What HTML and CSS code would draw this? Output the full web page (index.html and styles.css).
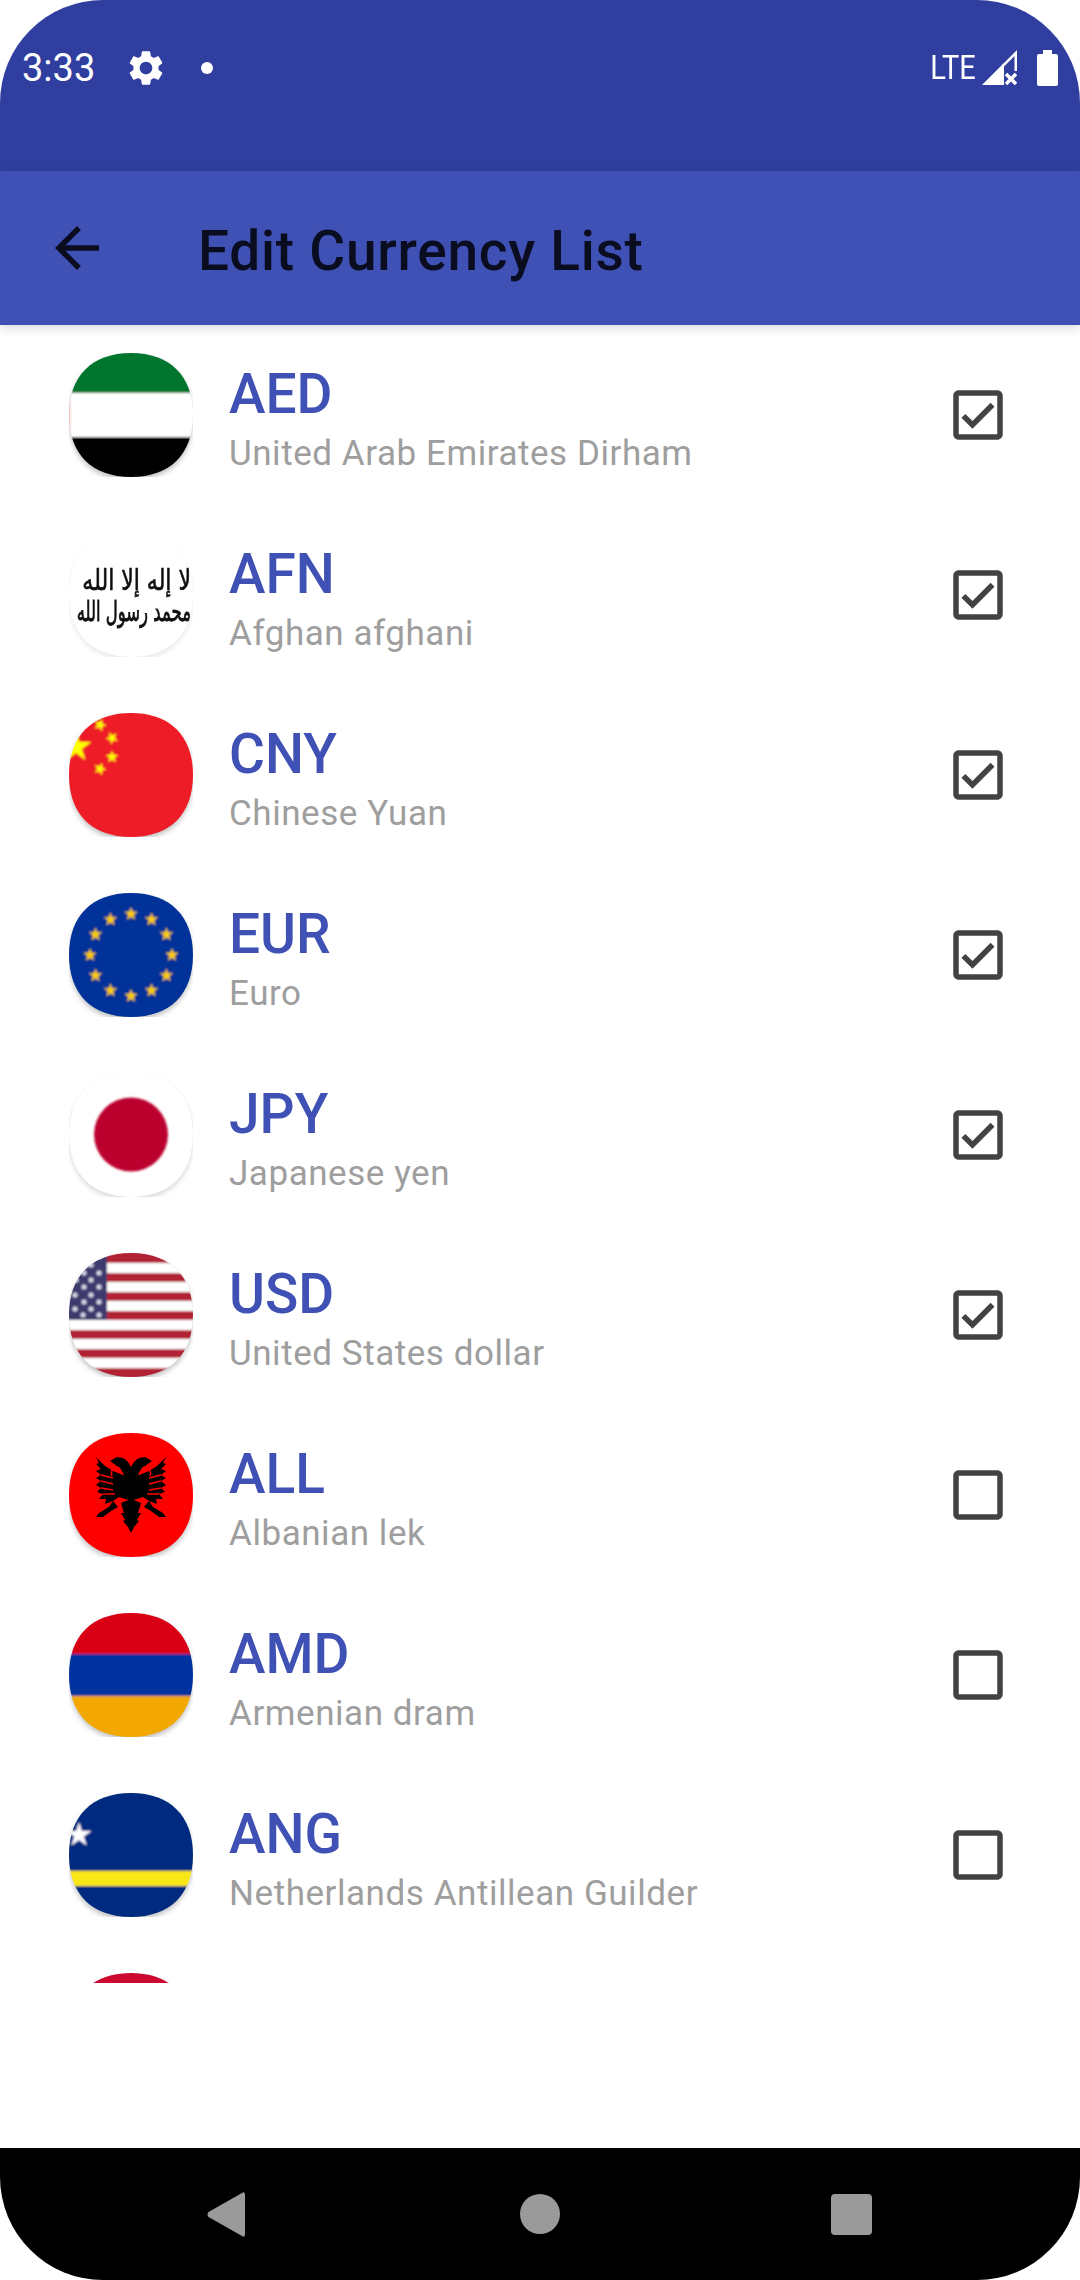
FILE: index.html
```html
<!DOCTYPE html>
<html lang="en">
<head>
    <meta charset="UTF-8">
    <title>Edit Currency List</title>
    <link rel="stylesheet" href="styles.css">
</head>
<body>
    <!-- Shared shapes for the flags and checkboxes -->
    <svg class="defs" width="0" height="0">
        <defs>
            <path id="squirclePath" d="M62 0C101 0 124 23 124 62C124 101 101 124 62 124C23 124 0 101 0 62C0 23 23 0 62 0Z"/>
            <clipPath id="squircle"><use href="#squirclePath"/></clipPath>
            <filter id="soft" x="-5%" y="-5%" width="110%" height="110%"><feGaussianBlur stdDeviation="0.9"/></filter>
            <filter id="softer" x="-5%" y="-5%" width="110%" height="110%"><feGaussianBlur stdDeviation="1.3"/></filter>
            <filter id="sharp" x="-5%" y="-5%" width="110%" height="110%"><feGaussianBlur stdDeviation="0.5"/></filter>
            <filter id="shadeBlur" x="-10%" y="-10%" width="120%" height="120%"><feGaussianBlur stdDeviation="2.5"/></filter>
            <polygon id="star" points="0,-1 .224,-.309 .951,-.309 .363,.118 .588,.809 0,.382 -.588,.809 -.363,.118 -.951,-.309 -.224,-.309"/>
            <g id="shade"><use href="#squirclePath" transform="translate(0 3)" fill="rgba(0,0,0,.24)" filter="url(#shadeBlur)"/></g>
            <symbol id="checked" viewBox="0 0 24 24"><path d="M19 3H5c-1.11 0-2 .9-2 2v14c0 1.1.89 2 2 2h14c1.11 0 2-.9 2-2V5c0-1.1-.89-2-2-2zm0 16H5V5h14v14zM17.99 9l-1.41-1.42-6.59 6.59-2.58-2.57-1.42 1.41 4 3.99z"/></symbol>
            <symbol id="unchecked" viewBox="0 0 24 24"><path d="M19 5v14H5V5h14m0-2H5c-1.1 0-2 .9-2 2v14c0 1.1.9 2 2 2h14c1.1 0 2-.9 2-2V5c0-1.1-.9-2-2-2z"/></symbol>
        </defs>
    </svg>

    <div id="screen">
        <div id="statusBar">
            <span class="time">3:33</span>
            <svg class="gear" viewBox="0 0 24 24"><path d="M19.14 12.94c.04-.3.06-.61.06-.94 0-.32-.02-.64-.07-.94l2.03-1.58c.18-.14.23-.41.12-.61l-1.92-3.32c-.12-.22-.37-.29-.59-.22l-2.39.96c-.5-.38-1.03-.7-1.62-.94l-.36-2.54c-.04-.24-.24-.41-.48-.41h-3.84c-.24 0-.43.17-.47.41l-.36 2.54c-.59.24-1.13.57-1.62.94l-2.39-.96c-.22-.08-.47 0-.59.22L2.74 8.87c-.12.21-.08.47.12.61l2.03 1.58c-.05.3-.09.63-.09.94s.02.64.07.94l-2.03 1.58c-.18.14-.23.41-.12.61l1.92 3.32c.12.22.37.29.59.22l2.39-.96c.5.38 1.03.7 1.62.94l.36 2.54c.05.24.24.41.48.41h3.84c.24 0 .44-.17.47-.41l.36-2.54c.59-.24 1.13-.56 1.62-.94l2.39.96c.22.08.47 0 .59-.22l1.92-3.32c.12-.22.07-.47-.12-.61l-2.01-1.58zM12 15.6c-1.98 0-3.6-1.62-3.6-3.6s1.62-3.6 3.6-3.6 3.6 1.62 3.6 3.6-1.62 3.6-3.6 3.6z"/></svg>
            <span class="dot"></span>
            <span class="lte">LTE</span>
            <svg class="signal" viewBox="0 0 35 35">
                <path d="M0 35L22 13V35Z"/>
                <path d="M35 0V21H32.500V6L21 17.500L19.500 15.500Z"/>
                <path d="M24 24L34 34M34 24L24 34" class="signalCross"/>
            </svg>
            <svg class="battery" viewBox="0 0 21 36"><path d="M6 0H15V4H19C20.100 4 21 4.900 21 6V34C21 35.100 20.100 36 19 36H2C.9 36 0 35.100 0 34V6C0 4.900 .9 4 2 4H6Z"/></svg>
        </div>

        <div id="toolbar">
            <svg class="backArrow" viewBox="0 0 24 24"><path d="M20 11H7.830l5.590-5.590L12 4l-8 8 8 8 1.410-1.410L7.830 13H20v-2z"/></svg>
            <div class="toolbarTitle">Edit Currency List</div>
        </div>

        <div id="currencyList">
            <div class="row">
                <svg class="flag" viewBox="0 0 124 124"><use href="#shade"/><g clip-path="url(#squircle)"><g filter="url(#soft)">
                    <rect x="-4" y="-4" width="132" height="44" fill="#05742f"/>
                    <rect x="-4" y="40" width="132" height="44" fill="#fff"/>
                    <rect x="-4" y="84" width="132" height="44" fill="#000"/>
                    <rect x="-4" y="40" width="5" height="44" fill="#f6a0a0"/>
                </g></g></svg>
                <div class="rowText"><div class="code">AED</div><div class="name">United Arab Emirates Dirham</div></div>
                <svg class="check"><use href="#checked"/></svg>
            </div>
            <div class="row">
                <svg class="flag" viewBox="0 0 124 124"><use href="#shade" opacity=".35"/><g clip-path="url(#squircle)"><use href="#squirclePath" fill="#fff"/><g filter="url(#sharp)">
                    <text class="shahada shahadaTop" transform="translate(122 57) scale(1 1.300)">لا إله إلا الله</text>
                    <text class="shahada" transform="translate(122 88) scale(1 1.700)">محمد رسول الله</text>
                </g></g></svg>
                <div class="rowText"><div class="code">AFN</div><div class="name">Afghan afghani</div></div>
                <svg class="check"><use href="#checked"/></svg>
            </div>
            <div class="row">
                <svg class="flag" viewBox="0 0 124 124"><use href="#shade"/><g clip-path="url(#squircle)"><g filter="url(#soft)">
                    <rect x="-4" y="-4" width="132" height="132" fill="#ee1c25"/>
                    <g fill="#ff0">
                        <use href="#star" transform="translate(7 34) scale(16)"/>
                        <use href="#star" transform="translate(31 12) rotate(20) scale(6.500)"/>
                        <use href="#star" transform="translate(43 25) rotate(45) scale(6.500)"/>
                        <use href="#star" transform="translate(43 44) scale(6.500)"/>
                        <use href="#star" transform="translate(31 56) rotate(20) scale(6.500)"/>
                    </g>
                </g></g></svg>
                <div class="rowText"><div class="code">CNY</div><div class="name">Chinese Yuan</div></div>
                <svg class="check"><use href="#checked"/></svg>
            </div>
            <div class="row">
                <svg class="flag" viewBox="0 0 124 124"><use href="#shade"/><g clip-path="url(#squircle)"><g filter="url(#soft)">
                    <rect x="-4" y="-4" width="132" height="132" fill="#003399"/>
                    <g fill="#fc0">
                        <use href="#star" transform="translate(62 21) scale(7)"/>
                        <use href="#star" transform="translate(82.500 26.500) scale(7)"/>
                        <use href="#star" transform="translate(97.500 41.500) scale(7)"/>
                        <use href="#star" transform="translate(103 62) scale(7)"/>
                        <use href="#star" transform="translate(97.500 82.500) scale(7)"/>
                        <use href="#star" transform="translate(82.500 97.500) scale(7)"/>
                        <use href="#star" transform="translate(62 103) scale(7)"/>
                        <use href="#star" transform="translate(41.500 97.500) scale(7)"/>
                        <use href="#star" transform="translate(26.500 82.500) scale(7)"/>
                        <use href="#star" transform="translate(21 62) scale(7)"/>
                        <use href="#star" transform="translate(26.500 41.500) scale(7)"/>
                        <use href="#star" transform="translate(41.500 26.500) scale(7)"/>
                    </g>
                </g></g></svg>
                <div class="rowText"><div class="code">EUR</div><div class="name">Euro</div></div>
                <svg class="check"><use href="#checked"/></svg>
            </div>
            <div class="row">
                <svg class="flag" viewBox="0 0 124 124"><use href="#shade" opacity=".6"/><g clip-path="url(#squircle)"><use href="#squirclePath" fill="#fff"/><circle cx="62" cy="61.500" r="37" fill="#bc002d" filter="url(#soft)"/></g></svg>
                <div class="rowText"><div class="code">JPY</div><div class="name">Japanese yen</div></div>
                <svg class="check"><use href="#checked"/></svg>
            </div>
            <div class="row">
                <svg class="flag" viewBox="0 0 124 124"><use href="#shade"/><g clip-path="url(#squircle)"><g filter="url(#softer)">
                    <rect x="-4" y="-4" width="132" height="132" fill="#fff"/>
                    <g fill="#b22234">
                        <rect x="-4" y="-4" width="132" height="14"/>
                        <rect x="-4" y="20" width="132" height="9"/>
                        <rect x="-4" y="39" width="132" height="9"/>
                        <rect x="-4" y="58" width="132" height="9"/>
                        <rect x="-4" y="77" width="132" height="9"/>
                        <rect x="-4" y="96" width="132" height="9"/>
                        <rect x="-4" y="115" width="132" height="13"/>
                    </g>
                    <rect x="-4" y="-4" width="42" height="71" fill="#3c3b6e"/>
                    <g fill="#d8d8e6">
                        <circle cx="23" cy="3" r="2.500"/><circle cx="30" cy="3" r="2.500"/>
                        <circle cx="22" cy="12" r="2.500"/><circle cx="30" cy="20" r="2.500"/>
                        <circle cx="15" cy="20" r="2.500"/><circle cx="22" cy="27" r="2.500"/>
                        <circle cx="7" cy="27" r="2.500"/><circle cx="30" cy="34" r="2.500"/>
                        <circle cx="15" cy="34" r="2.500"/><circle cx="22" cy="42" r="2.500"/>
                        <circle cx="6" cy="42" r="2.500"/><circle cx="30" cy="49" r="2.500"/>
                        <circle cx="15" cy="49" r="2.500"/><circle cx="22" cy="56" r="2.500"/>
                        <circle cx="6" cy="56" r="2.500"/><circle cx="30" cy="62" r="2.500"/>
                        <circle cx="14" cy="62" r="2.500"/>
                    </g>
                </g></g></svg>
                <div class="rowText"><div class="code">USD</div><div class="name">United States dollar</div></div>
                <svg class="check"><use href="#checked"/></svg>
            </div>
            <div class="row">
                <svg class="flag" viewBox="0 0 124 124"><use href="#shade"/><g clip-path="url(#squircle)"><g filter="url(#sharp)">
                    <rect x="-4" y="-4" width="132" height="132" fill="#f00"/>
                    <g id="eagleHalf">
                        <path d="M54 42L44 38L36 33L27 24L30 30L27 31L32 36L27 38L32 42L27 45L32 48L27 52L32 55L28 59L34 61L30 66L37 66L36 71L44 68L50 64L62 68V42Z"/>
                        <path d="M62 50L56 43C52 38 53 35 48 33L41 28L48 24L54 25C58 27 60 30 62 34Z"/>
                        <path d="M52 70L55 80L52 80L56 87L54 88L59 94L62 100V66Z"/>
                        <path d="M44 68L40 74L30 80L27 84L34 84L42 78L49 74Z"/>
                        <path d="M46 35C43 37 41 39 43 43M32 42L44 45M32 48L44 51M32 55L44 57M34 61L46 61" fill="none" stroke="#f00" stroke-width="1.500"/>
                    </g>
                    <use href="#eagleHalf" transform="translate(124 0) scale(-1 1)"/>
                </g></g></svg>
                <div class="rowText"><div class="code">ALL</div><div class="name">Albanian lek</div></div>
                <svg class="check"><use href="#unchecked"/></svg>
            </div>
            <div class="row">
                <svg class="flag" viewBox="0 0 124 124"><use href="#shade"/><g clip-path="url(#squircle)"><g filter="url(#soft)">
                    <rect x="-4" y="-4" width="132" height="45" fill="#d90012"/>
                    <rect x="-4" y="41" width="132" height="42" fill="#0033a0"/>
                    <rect x="-4" y="83" width="132" height="45" fill="#f2a800"/>
                </g></g></svg>
                <div class="rowText"><div class="code">AMD</div><div class="name">Armenian dram</div></div>
                <svg class="check"><use href="#unchecked"/></svg>
            </div>
            <div class="row">
                <svg class="flag" viewBox="0 0 124 124"><use href="#shade"/><g clip-path="url(#squircle)"><g filter="url(#soft)">
                    <rect x="-4" y="-4" width="132" height="132" fill="#002b7f"/>
                    <rect x="-4" y="78" width="132" height="15" fill="#f9e814"/>
                    <use href="#star" transform="translate(10 42) scale(13)" fill="#fff"/>
                </g></g></svg>
                <div class="rowText"><div class="code">ANG</div><div class="name">Netherlands Antillean Guilder</div></div>
                <svg class="check"><use href="#unchecked"/></svg>
            </div>
            <!-- Next row is cut off by the list edge, only the top of its flag shows -->
            <div class="row">
                <svg class="flag" viewBox="0 0 124 124"><g clip-path="url(#squircle)"><rect width="124" height="62" fill="#cc092f"/></g></svg>
            </div>
        </div>

        <div id="navBar">
            <svg class="navBack" viewBox="0 0 38 45"><path d="M35 1Q38 -1 38 3V42Q38 46 35 44L1.500 25Q-.5 22.500 1.500 20Z"/></svg>
            <span class="navHome"></span>
            <span class="navRecent"></span>
        </div>
    </div>
</body>
</html>
```

FILE: styles.css
```css
body {
    margin: 0;
    background-color: #fff;
    font-family: Roboto, "Liberation Sans", sans-serif;
    overflow: hidden;
}

.defs {
    position: absolute;
}

#screen {
    display: flex;
    flex-direction: column;
    width: 1080px;
    height: 2280px;
}

/* Status bar */
#statusBar {
    display: flex;
    align-items: center;
    box-sizing: border-box;
    height: 171px;
    padding: 0 22px 36px 22px;
    background-color: #303f9f;
    border-radius: 103px 103px 0 0;
    color: #fff;
}

.time {
    font-size: 38px;
    width: 103px;
}

.gear {
    width: 42px;
    height: 42px;
    fill: #fff;
}

.dot {
    width: 12px;
    height: 12px;
    margin-left: 34px;
    border-radius: 50%;
    background-color: #fff;
}

.lte {
    margin-left: auto;
    font-size: 33px;
    transform: scaleX(0.88);
    transform-origin: right center;
}

.signal {
    width: 35px;
    height: 35px;
    margin-left: 6px;
    fill: #fff;
}

.signalCross {
    fill: none;
    stroke: #fff;
    stroke-width: 3.5;
}

.battery {
    width: 21px;
    height: 36px;
    margin-left: 20px;
    fill: #fff;
}

/* Toolbar */
#toolbar {
    display: flex;
    align-items: center;
    height: 154px;
    padding-left: 44px;
    background-color: #3f51b5;
    box-shadow: 0 3px 10px rgba(0, 0, 0, 0.14);
    color: #0a0c20;
}

.backArrow {
    width: 66px;
    height: 66px;
    fill: #0a0c20;
}

.toolbarTitle {
    margin: 5px 0 0 88px;
    font-size: 55px;
    font-weight: 500;
    letter-spacing: 0.75px;
}

/* Currency rows */
#currencyList {
    height: 1630px;
    padding-top: 28px;
    overflow: hidden;
}

.row {
    display: flex;
    height: 180px;
    padding: 0 69px;
}

.flag {
    width: 124px;
    height: 124px;
    flex-shrink: 0;
}

.shahada {
    font-family: "DejaVu Sans", sans-serif;
    font-size: 16.500px;
    fill: #111;
    stroke: #111;
    stroke-width: 0.5;
    direction: rtl;
}

.shahadaTop {
    font-size: 22px;
}

.rowText {
    flex: 1;
    margin-left: 36px;
    padding-top: 9px;
}

.code {
    color: #3f51b5;
    font-size: 55px;
    font-weight: 500;
    line-height: 64px;
}

.name {
    color: #9e9e9e;
    font-size: 35px;
    letter-spacing: 0.55px;
    line-height: 44px;
    margin-top: 6px;
}

.check {
    width: 66px;
    height: 66px;
    margin-top: 29px;
    fill: #424242;
}

/* Navigation bar */
#navBar {
    display: flex;
    align-items: center;
    justify-content: space-between;
    box-sizing: border-box;
    height: 132px;
    margin-top: auto;
    padding: 0 208px 0 207px;
    background-color: #000;
    border-radius: 0 0 103px 103px;
}

.navBack {
    width: 38px;
    height: 45px;
    fill: #9a9a9a;
}

.navHome {
    width: 40px;
    height: 40px;
    margin-left: 4px;
    border-radius: 50%;
    background-color: #9a9a9a;
}

.navRecent {
    width: 41px;
    height: 41px;
    border-radius: 4px;
    background-color: #9a9a9a;
}
```
